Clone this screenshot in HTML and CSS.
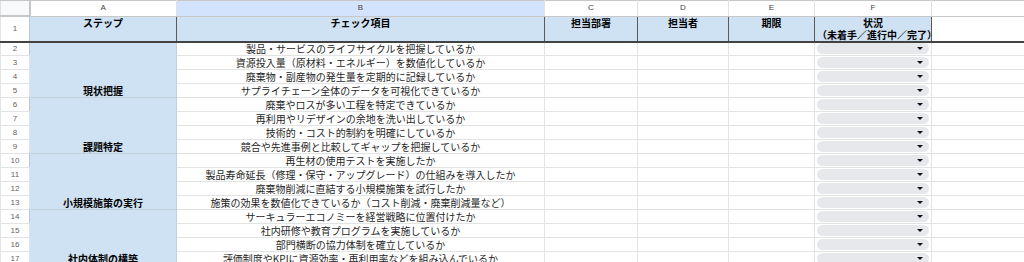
FILE: index.html
```html
<!DOCTYPE html>
<html lang="ja">
<head>
<meta charset="UTF-8" />
<title>サーキュラーエコノミー チェックリスト</title>
<link rel="stylesheet" href="styles.css">
</head>
<body>
<table class="sheet">
  <colgroup>
    <col class="c-num">
    <col class="c-a">
    <col class="c-b">
    <col class="c-c">
    <col class="c-d">
    <col class="c-e">
    <col class="c-f">
    <col class="c-g">
  </colgroup>
  <tr class="colhead">
    <th class="corner"></th>
    <th>A</th>
    <th class="sel">B</th>
    <th>C</th>
    <th>D</th>
    <th>E</th>
    <th>F</th>
    <th></th>
  </tr>
  <tr class="r1">
    <td class="num">1</td>
    <td class="hd">ステップ</td>
    <td class="hd">チェック項目</td>
    <td class="hd">担当部署</td>
    <td class="hd">担当者</td>
    <td class="hd">期限</td>
    <td class="hd">状況<br>（未着手／進行中／完了）</td>
    <td class="blank"></td>
  </tr>
  <tr>
    <td class="num">2</td>
    <td class="step" rowspan="4">現状把握</td>
    <td class="item">製品・サービスのライフサイクルを把握しているか</td>
    <td></td><td></td><td></td>
    <td class="st"><div class="chip"></div></td>
    <td></td>
  </tr>
  <tr>
    <td class="num">3</td>
    <td class="item">資源投入量（原材料・エネルギー）を数値化しているか</td>
    <td></td><td></td><td></td>
    <td class="st"><div class="chip"></div></td>
    <td></td>
  </tr>
  <tr>
    <td class="num">4</td>
    <td class="item">廃棄物・副産物の発生量を定期的に記録しているか</td>
    <td></td><td></td><td></td>
    <td class="st"><div class="chip"></div></td>
    <td></td>
  </tr>
  <tr>
    <td class="num">5</td>
    <td class="item">サプライチェーン全体のデータを可視化できているか</td>
    <td></td><td></td><td></td>
    <td class="st"><div class="chip"></div></td>
    <td></td>
  </tr>
  <tr>
    <td class="num">6</td>
    <td class="step" rowspan="4">課題特定</td>
    <td class="item">廃棄やロスが多い工程を特定できているか</td>
    <td></td><td></td><td></td>
    <td class="st"><div class="chip"></div></td>
    <td></td>
  </tr>
  <tr>
    <td class="num">7</td>
    <td class="item">再利用やリデザインの余地を洗い出しているか</td>
    <td></td><td></td><td></td>
    <td class="st"><div class="chip"></div></td>
    <td></td>
  </tr>
  <tr>
    <td class="num">8</td>
    <td class="item">技術的・コスト的制約を明確にしているか</td>
    <td></td><td></td><td></td>
    <td class="st"><div class="chip"></div></td>
    <td></td>
  </tr>
  <tr>
    <td class="num">9</td>
    <td class="item">競合や先進事例と比較してギャップを把握しているか</td>
    <td></td><td></td><td></td>
    <td class="st"><div class="chip"></div></td>
    <td></td>
  </tr>
  <tr>
    <td class="num">10</td>
    <td class="step" rowspan="4">小規模施策の実行</td>
    <td class="item">再生材の使用テストを実施したか</td>
    <td></td><td></td><td></td>
    <td class="st"><div class="chip"></div></td>
    <td></td>
  </tr>
  <tr>
    <td class="num">11</td>
    <td class="item">製品寿命延長（修理・保守・アップグレード）の仕組みを導入したか</td>
    <td></td><td></td><td></td>
    <td class="st"><div class="chip"></div></td>
    <td></td>
  </tr>
  <tr>
    <td class="num">12</td>
    <td class="item">廃棄物削減に直結する小規模施策を試行したか</td>
    <td></td><td></td><td></td>
    <td class="st"><div class="chip"></div></td>
    <td></td>
  </tr>
  <tr>
    <td class="num">13</td>
    <td class="item">施策の効果を数値化できているか（コスト削減・廃棄削減量など）</td>
    <td></td><td></td><td></td>
    <td class="st"><div class="chip"></div></td>
    <td></td>
  </tr>
  <tr>
    <td class="num">14</td>
    <td class="step" rowspan="4">社内体制の構築</td>
    <td class="item">サーキュラーエコノミーを経営戦略に位置付けたか</td>
    <td></td><td></td><td></td>
    <td class="st"><div class="chip"></div></td>
    <td></td>
  </tr>
  <tr>
    <td class="num">15</td>
    <td class="item">社内研修や教育プログラムを実施しているか</td>
    <td></td><td></td><td></td>
    <td class="st"><div class="chip"></div></td>
    <td></td>
  </tr>
  <tr>
    <td class="num">16</td>
    <td class="item">部門横断の協力体制を確立しているか</td>
    <td></td><td></td><td></td>
    <td class="st"><div class="chip"></div></td>
    <td></td>
  </tr>
  <tr>
    <td class="num">17</td>
    <td class="item">評価制度やKPIに資源効率・再利用率などを組み込んでいるか</td>
    <td></td><td></td><td></td>
    <td class="st"><div class="chip"></div></td>
    <td></td>
  </tr>
</table>
</body>
</html>
```

FILE: styles.css
```css
body {
  margin: 0;
  background: #fff;
  font-family: "Noto Sans CJK JP", "Noto Sans", sans-serif;
  color: #1f1f1f;
  overflow: hidden;
}
.sheet {
  border-collapse: collapse;
  table-layout: fixed;
  width: 1024px;
  font-size: 10px;
}
.c-num { width: 29px; }
.c-a { width: 147px; }
.c-b { width: 368px; }
.c-c { width: 93px; }
.c-d { width: 91px; }
.c-e { width: 86px; }
.c-f { width: 117px; }
.c-g { width: 93px; }

td, th {
  border: 1px solid #e2e3e3;
  padding: 0 2px;
  line-height: 12px;
  white-space: nowrap;
  overflow: hidden;
}

/* cabecera de columnas */
.colhead th {
  height: 14px;
  font-weight: normal;
  font-size: 8px;
  color: #444;
  background: #fff;
  border-top: 1px solid #c7c7c7;
  border-bottom: 1px solid #c7c7c7;
  border-left: 1px solid #e1e1e1;
  border-right: 1px solid #e1e1e1;
  font-family: "Liberation Sans", Arial, sans-serif;
}
.colhead th.corner {
  background: #f8f9fa;
  border-right: 2px solid #c4c7c5;
  border-bottom: 2px solid #c4c7c5;
}
.colhead th.sel {
  background: #d3e3fd;
}

/* numeros de fila */
.num {
  font-size: 8px;
  color: #5f6368;
  text-align: center;
  padding: 0;
  font-family: "Liberation Sans", Arial, sans-serif;
  border-right: 1px solid #c7c7c7;
}

tr { height: 14px; }

/* fila 1 */
.r1 { height: 25px; }
.r1 td {
  border-bottom: 2px solid #434343;
  overflow: visible;
}
.r1 .hd {
  background: #cfe2f3;
  font-weight: bold;
  text-align: center;
  vertical-align: top;
  padding-top: 0;
  line-height: 12px;
  color: #000;
  border-left: 1px solid #595959;
  border-right: 1px solid #595959;
}
.r1 .num { vertical-align: middle; }
.r1 .blank { border-left: 1px solid #595959; }

.step {
  background: #cfe2f3;
  font-weight: bold;
  text-align: center;
  vertical-align: bottom;
  color: #000;
  border-right: 1px solid #c3d1dd;
  border-bottom: 1px solid #c3d1dd;
}
.item {
  text-align: center;
  color: #1f1f1f;
}

/* desplegable de estado */
.st { padding: 0 2px; }
.chip {
  position: relative;
  height: 11px;
  border-radius: 6px;
  background: #e6e8eb;
}
.chip::after {
  content: '';
  position: absolute;
  right: 6px;
  top: 4px;
  border-left: 3px solid transparent;
  border-right: 3px solid transparent;
  border-top: 3px solid #111;
}
```
